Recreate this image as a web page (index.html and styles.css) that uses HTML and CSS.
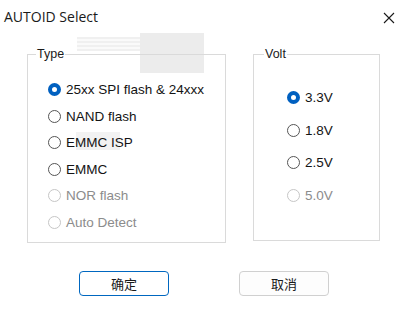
FILE: index.html
```html
<!DOCTYPE html>
<html>
<head>
<meta charset="utf-8">
<link rel="stylesheet" href="styles.css">
</head>
<body>
<div class="window">
  <div class="titlebar">
    <span class="title">AUTOID Select</span>
    <svg class="close" width="12" height="12" viewBox="0 0 12 12"><path d="M1 1L11 11M11 1L1 11" stroke="#1a1a1a" stroke-width="1.1" fill="none"/></svg>
  </div>
  <div class="ghost ghost-a"></div>
  <div class="ghost ghost-b"></div>
  <div class="ghost ghost-c"></div>
  <div class="groups">
    <fieldset class="group type">
      <legend>Type</legend>
      <div class="item"><span class="radio checked"></span><span>25xx SPI flash &amp; 24xxx</span></div>
      <div class="item"><span class="radio"></span><span>NAND flash</span></div>
      <div class="item"><span class="radio"></span><span>EMMC ISP</span></div>
      <div class="item"><span class="radio"></span><span>EMMC</span></div>
      <div class="item disabled"><span class="radio"></span><span>NOR flash</span></div>
      <div class="item disabled"><span class="radio"></span><span>Auto Detect</span></div>
    </fieldset>
    <fieldset class="group volt">
      <legend>Volt</legend>
      <div class="item"><span class="radio checked"></span><span>3.3V</span></div>
      <div class="item"><span class="radio"></span><span>1.8V</span></div>
      <div class="item"><span class="radio"></span><span>2.5V</span></div>
      <div class="item disabled"><span class="radio"></span><span>5.0V</span></div>
    </fieldset>
  </div>
  <div class="buttons">
    <button class="btn primary">确定</button>
    <button class="btn">取消</button>
  </div>
</div>
</body>
</html>
```
FILE: styles.css
```css
html, body {
  margin: 0;
  padding: 0;
  background: #ffffff;
}
body {
  width: 409px;
  height: 310px;
  overflow: hidden;
  font-family: "Liberation Sans", "DejaVu Sans", sans-serif;
}
.window {
  position: relative;
  width: 409px;
  height: 310px;
  background: #fff;
  border-radius: 8px 8px 0 0;
  box-sizing: border-box;
}
.titlebar {
  display: flex;
  align-items: center;
  justify-content: space-between;
  height: 34px;
  padding: 0 14px 0 4px;
}
.title {
  font-family: "Open Sans", "Noto Sans", sans-serif;
  font-size: 14px;
  color: #1a1a1a;
  margin-top: -1px;
}
.close {
  margin-top: 1px;
}
.ghost {
  position: absolute;
  background: #ececec;
}
.ghost-a { left: 140px; top: 33px; width: 64px; height: 40px; }
.ghost-b { left: 77px; top: 37px; width: 63px; height: 14px; background: repeating-linear-gradient(#f0f0f0 0 2px, #fafafa 2px 4px); }
.ghost-c { left: 76px; top: 132px; width: 44px; height: 18px; background: #f2f2f2; }
.groups {
  position: relative;
  display: flex;
  align-items: flex-start;
  padding: 13px 0 0 27px;
  gap: 27px;
}
.group {
  margin: 0;
  border: 1px solid #dadada;
  box-sizing: border-box;
  font-size: 13.5px;
  color: #141414;
}
.group legend {
  padding: 0 1px;
  font-size: 12.5px;
  color: #1a1a1a;
}
.type {
  width: 199px;
  height: 196px;
  padding: 22px 0 0 20px;
  display: flex;
  flex-direction: column;
  gap: 13.5px;
}
.type legend {
  margin-left: -12px;
}
.volt {
  width: 127px;
  height: 194px;
  padding: 30px 0 0 33px;
  display: flex;
  flex-direction: column;
  gap: 19.5px;
}
.volt legend {
  margin-left: -23px;
}
.item {
  display: flex;
  align-items: center;
  gap: 5px;
  height: 13px;
  white-space: nowrap;
}
.radio {
  width: 13px;
  height: 13px;
  box-sizing: border-box;
  border: 1px solid #555;
  border-radius: 50%;
  background: #fff;
  flex: none;
}
.radio.checked {
  border: 4px solid #0060c0;
  background: #fff;
}
.disabled {
  color: #8c8c8c;
}
.disabled .radio {
  border-color: #c6c6c6;
}
.buttons {
  display: flex;
  gap: 70px;
  padding: 28px 0 0 79px;
}
.btn {
  width: 90px;
  height: 25px;
  box-sizing: border-box;
  border: 1px solid #d0d0d0;
  border-radius: 4px;
  background: #fdfdfd;
  font-family: "Noto Sans CJK SC", sans-serif;
  font-size: 13px;
  color: #1a1a1a;
  padding: 0;
}
.btn.primary {
  border: 1.5px solid #0067c0;
  background: #fff;
}
```
